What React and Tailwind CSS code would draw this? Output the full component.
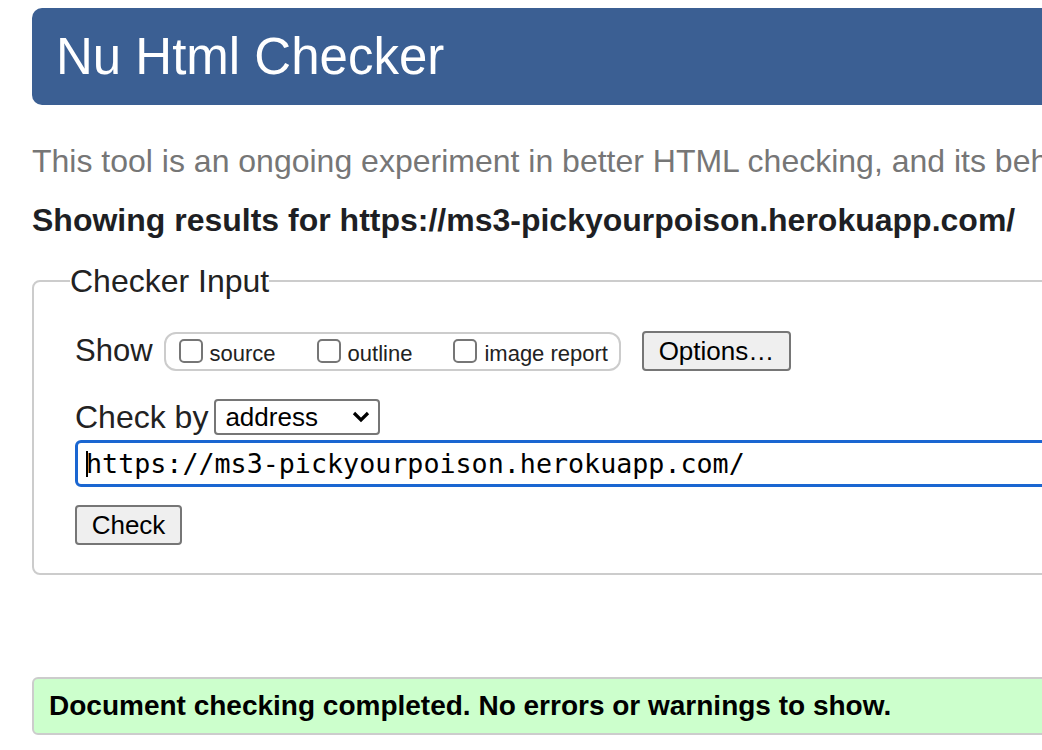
import React from "react";

const Box = ({ label }) => (
  <label className="flex items-center">
    <span className="w-[24px] h-[24px] rounded-[5px] border-2 border-[#767676] bg-white" />
    <span className="ml-[7px] text-[22px] text-[#222] leading-[26px] mt-[6px]">{label}</span>
  </label>
);

export default function App() {
  return (
    <div
      className="w-[1042px] h-[750px] overflow-hidden bg-white"
      style={{ fontFamily: '"Liberation Sans", Arial, sans-serif' }}
    >
      <div className="w-[1400px] pl-[32px] pt-[8px]">
        {/* Header */}
        <header className="h-[97px] rounded-[10px] bg-[#3b5f93] pl-[24px] flex items-center">
          <h1 className="text-[51px] leading-[58px] text-white">Nu Html Checker</h1>
        </header>

        <p className="mt-[38px] text-[32px] leading-[36px] text-[#767676] whitespace-nowrap">
          This tool is an ongoing experiment in better HTML checking, and its behavior remains subject to change
        </p>

        <h2 className="mt-[23px] text-[32px] leading-[37px] font-bold text-[#1e1f24] whitespace-nowrap">
          Showing results for https://ms3-pickyourpoison.herokuapp.com/
        </h2>

        {/* Checker Input */}
        <fieldset className="mt-[24px] border-2 border-[#cccccc] rounded-[8px] pl-[41px] pt-[32px] pb-[28px]">
          <legend className="-ml-[5px] text-[32px] leading-[36px] text-[#222]">Checker Input</legend>

          <div className="flex items-center h-[40px]">
            <span className="text-[31px] leading-[36px] text-[#222]">Show</span>
            <div className="ml-[11px] h-[39px] flex items-center gap-[41px] rounded-[12px] border-2 border-[#cccccc] pl-[13px] pr-[11px]">
              <Box label="source" />
              <Box label="outline" />
              <Box label="image report" />
            </div>
            <button className="ml-[21px] h-[40px] w-[149px] rounded-[4px] border-2 border-[#767676] bg-[#efefef] text-[26px] leading-[30px] text-black">
              Options…
            </button>
          </div>

          <div className="mt-[28px] flex items-center h-[36px]">
            <span className="text-[32px] leading-[36px] text-[#222]">Check by</span>
            <div className="ml-[6px] h-[36px] w-[166px] rounded-[4px] border-2 border-[#767676] bg-white flex items-center pl-[9px] pr-[8px] justify-between">
              <span className="text-[26px] leading-[30px] text-black">address</span>
              <svg width="18" height="12" viewBox="0 0 18 12">
                <polyline points="2,2 9,9 16,2" fill="none" stroke="#000" strokeWidth="3.2" />
              </svg>
            </div>
          </div>

          <div
            className="mt-[5px] h-[47px] rounded-[6px] border-[3px] border-[#1a66d1] bg-white flex items-center pl-[8px]"
            style={{ fontFamily: '"DejaVu Sans Mono", "Liberation Mono", monospace' }}
          >
            <span className="w-[2px] h-[26px] bg-black -mr-[2px]" />
            <span className="text-[26.7px] leading-[30px] text-black whitespace-nowrap">
              https://ms3-pickyourpoison.herokuapp.com/
            </span>
          </div>

          <button className="mt-[18px] h-[40px] w-[107px] rounded-[4px] border-2 border-[#767676] bg-[#efefef] text-[26px] leading-[30px] text-black">
            Check
          </button>
        </fieldset>

        {/* Result */}
        <div className="mt-[102px] h-[58px] rounded-[6px] border-2 border-[#cccccc] bg-[#ccffcc] flex items-center pl-[15px]">
          <span className="text-[28px] leading-[32px] font-bold text-black">
            Document checking completed. No errors or warnings to show.
          </span>
        </div>
      </div>
    </div>
  );
}
